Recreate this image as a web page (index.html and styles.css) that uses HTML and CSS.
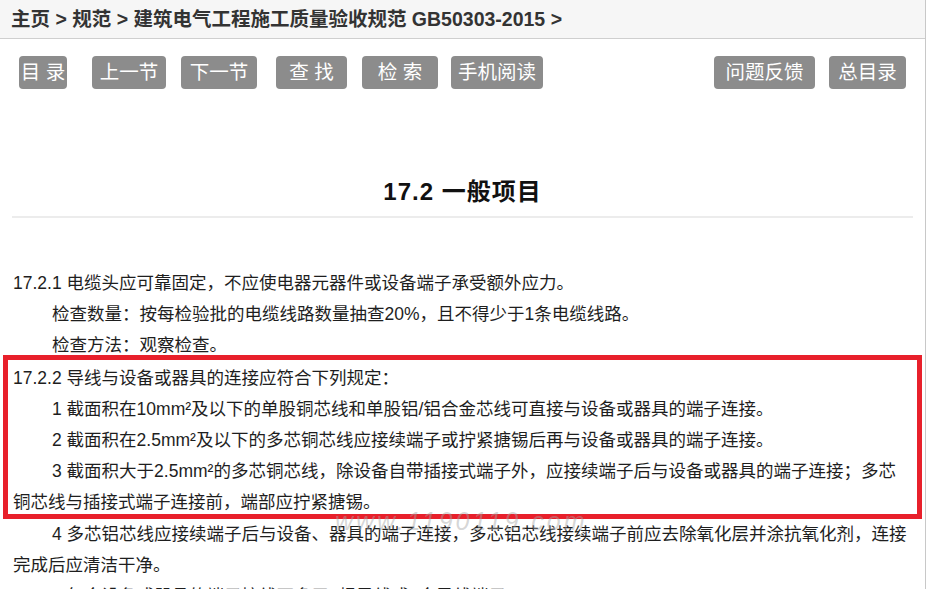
FILE: index.html
```html
<!DOCTYPE html>
<html lang="zh-CN">

<head>
  <meta charset="UTF-8">
  <title>17.2 一般项目</title>
  <link rel="stylesheet" href="styles.css">
</head>

<body>
  <div class="page">
    <div class="crumb">主页 &gt; 规范 &gt; 建筑电气工程施工质量验收规范 GB50303-2015 &gt;</div>

    <div class="tools">
      <div class="group">
        <span class="btn b-ml">目 录</span>
        <span class="btn b-prev">上一节</span>
        <span class="btn b-next">下一节</span>
        <span class="btn b-find">查 找</span>
        <span class="btn b-search">检 索</span>
        <span class="btn b-mobile">手机阅读</span>
      </div>
      <div class="group">
        <span class="btn b-feedback">问题反馈</span>
        <span class="btn b-all">总目录</span>
      </div>
    </div>

    <h1 class="title">17.2 一般项目</h1>

    <div class="content">
      <p>17.2.1 电缆头应可靠固定，不应使电器元器件或设备端子承受额外应力。</p>
      <p class="ind">检查数量：按每检验批的电缆线路数量抽查20%，且不得少于1条电缆线路。</p>
      <p class="ind">检查方法：观察检查。</p>
      <div class="mark">
        <p>17.2.2 导线与设备或器具的连接应符合下列规定：</p>
        <p class="ind">1 截面积在10mm²及以下的单股铜芯线和单股铝/铝合金芯线可直接与设备或器具的端子连接。</p>
        <p class="ind">2 截面积在2.5mm²及以下的多芯铜芯线应接续端子或拧紧搪锡后再与设备或器具的端子连接。</p>
        <p class="ind last">3 截面积大于2.5mm²的多芯铜芯线，除设备自带插接式端子外，应接续端子后与设备或器具的端子连接；多芯铜芯线与插接式端子连接前，端部应拧紧搪锡。</p>
      </div>
      <p class="ind">4 多芯铝芯线应接续端子后与设备、器具的端子连接，多芯铝芯线接续端子前应去除氧化层并涂抗氧化剂，连接完成后应清洁干净。</p>
      <p class="ind">5 每个设备或器具的端子接线不多于2根导线或2个导线端子。</p>
      <span class="stamp">www.1190119.com</span>
    </div>
  </div>
</body>

</html>
```

FILE: styles.css
```css
body {
  margin: 0;
  padding: 0;
  background: #fff;
  font-family: "Liberation Sans", "Noto Sans CJK SC", sans-serif;
  color: #1e1e1e;
}

.page {
  width: 925px;
  height: 589px;
  overflow: hidden;
  border-right: 1px solid #c8c8c8;
  position: relative;
}

.crumb {
  height: 38px;
  line-height: 38px;
  padding-left: 11px;
  background: #f6f6f6;
  border-bottom: 1px solid #cfcfcf;
  font-size: 19.5px;
  font-weight: bold;
  color: #333;
}

.tools {
  display: flex;
  justify-content: space-between;
  padding: 17px 19px 0 19px;
}

.group {
  display: flex;
}

.btn {
  display: block;
  height: 33px;
  line-height: 33px;
  text-align: center;
  background: #8c8c8c;
  color: #fff;
  font-size: 19.5px;
  border-radius: 4px;
  white-space: pre;
}

.b-ml { width: 48px; }
.b-prev { width: 74px; margin-left: 25px; }
.b-next { width: 76px; margin-left: 15px; }
.b-find { width: 71px; margin-left: 19px; }
.b-search { width: 76px; margin-left: 15px; }
.b-mobile { width: 92px; margin-left: 13px; }
.b-feedback { width: 101px; }
.b-all { width: 77px; margin-left: 14px; }

.title {
  margin: 83px 12px 0 12px;
  padding-bottom: 4px;
  border-bottom: 2px solid #ececec;
  height: 40px;
  line-height: 40px;
  text-align: center;
  font-size: 24px;
  letter-spacing: 1px;
  color: #111;
}

.content {
  padding: 50px 13px 0 13px;
  font-size: 17.5px;
  line-height: 31px;
}

.content p {
  margin: 0;
}

.ind {
  text-indent: 39px;
}

.mark {
  margin: -6px -10px 0 -10px;
  padding: 3px 5px 0 5px;
  border: 5px solid #e8202b;
}

.mark .last {
  margin-bottom: -4px;
}

.stamp {
  position: absolute;
  left: 335px;
  top: 506px;
  font-size: 25px;
  letter-spacing: 3px;
  color: rgba(165, 165, 165, 0.45);
  font-style: italic;
}
```
